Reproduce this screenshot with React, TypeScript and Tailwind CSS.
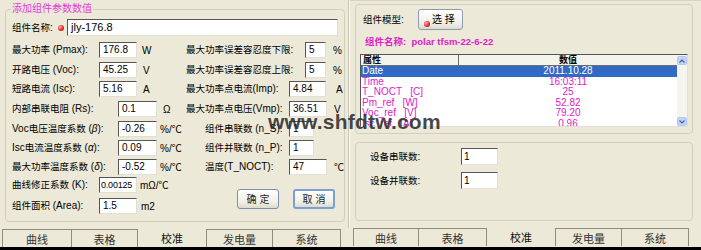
import React from "react";

const FONT = "font-['Liberation_Sans','Noto_Sans_CJK_SC',sans-serif]";

const CJK = /([\u3000-\u9fff\uff00-\uffef]+)/;

function M({ s }: { s: string }) {
  const parts = s.split(CJK);
  return (
    <>
      {parts.map((p, i) =>
        CJK.test(p) ? (
          <span key={i} className="text-[9.5px]">
            {p}
          </span>
        ) : (
          <React.Fragment key={i}>{p}</React.Fragment>
        )
      )}
    </>
  );
}

function Box({ cls, v, t }: { cls: string; v: string; t?: string }) {
  return (
    <div
      className={`h-[16px] shrink-0 bg-white border border-t-[#555] border-l-[#555] border-r-[#e2e0d6] border-b-[#e2e0d6] leading-[14px] text-black whitespace-nowrap overflow-hidden ${
        t ?? "text-[10px] pl-[3px]"
      } ${cls}`}
    >
      {v}
    </div>
  );
}

function Dot() {
  return (
    <span className="inline-block w-[6px] h-[6px] rounded-full bg-[radial-gradient(circle_at_35%_35%,#ffb0b0,#e02020_60%,#a00000)]" />
  );
}

function Tabs({ widths, first }: { widths: string[]; first: string }) {
  const names = ["曲线", "表格", "校准", "发电量", "系统"];
  return (
    <div className={`flex h-[18px] mt-[7px] ${first}`}>
      {names.map((n, i) => {
        const sel = i === 2;
        const cls =
          i === 0
            ? "border-l border-t border-r border-[#8c8c80]"
            : i === 1
            ? "border-t border-r border-[#8c8c80]"
            : i === 3
            ? "border-l border-t border-r border-[#8c8c80]"
            : i === 4
            ? "border-t border-r border-[#8c8c80]"
            : "";
        return (
          <div
            key={n}
            className={`${widths[i]} h-[18px] flex items-center justify-center text-[11px] ${sel ? "text-[#111]" : "text-[#333]"} ${cls}`}
          >
            <span className="mt-[3px]">{n}</span>
          </div>
        );
      })}
    </div>
  );
}

function Btn({ label, focus }: { label: string; focus?: boolean }) {
  return (
    <div
      className={`w-[42px] h-[20px] rounded-[3px] flex items-center justify-center text-[10px] text-[#222] bg-[linear-gradient(#ffffff,#f0efe6_70%,#dcdacb)] ${
        focus ? "border-2 border-[#7a9fd6]" : "border border-[#7f8fa8]"
      }`}
    >
      {label}
    </div>
  );
}

export default function App() {
  return (
    <div className={`w-[701px] h-[250px] bg-[#ece9d8] relative overflow-hidden ${FONT} text-[10px] text-black`}>
      <div className="flex h-[247px]">
        {/* Left panel */}
        <div className="w-[348px] flex flex-col">
          <div className="ml-[5px] mt-[9px] w-[340px] h-[213px] border border-[#d0d0bf] rounded-[4px] relative">
            <div className="absolute -top-[8px] left-[5px] px-[1px] bg-[#ece9d8] text-[10px] leading-[13px] text-[#e23cd8]">
              添加组件参数数值
            </div>
            <div className="pl-[6px] pt-[9px] flex flex-col">
              {/* name */}
              <div className="flex items-center h-[17px]">
                <span className="w-[46px]"><M s="组件名称:" /></span>
                <Dot />
                <div className="w-[3px]" />
                <div className="h-[17px] w-[271px] bg-white border border-t-[#555] border-l-[#555] border-r-[#e2e0d6] border-b-[#e2e0d6] pl-[3px] text-[11px] leading-[15px]">
                  jly-176.8
                </div>
              </div>
              {/* row 1 */}
              <div className="flex items-center h-[16px] mt-[6px]">
                <span className="w-[87px]"><M s="最大功率 (Pmax):" /></span>
                <Box cls="w-[38px]" v="176.8" />
                <span className="w-[49px] pl-[5px]">W</span>
                <span className="w-[119px]"><M s="最大功率误差容忍度下限:" /></span>
                <Box cls="w-[21px]" v="5" />
                <span className="ml-[7px]">%</span>
              </div>
              {/* row 2 */}
              <div className="flex items-center h-[16px] mt-[4px]">
                <span className="w-[87px]"><M s="开路电压 (Voc):" /></span>
                <Box cls="w-[38px]" v="45.25" />
                <span className="w-[49px] pl-[6px]">V</span>
                <span className="w-[119px]"><M s="最大功率误差容忍度上限:" /></span>
                <Box cls="w-[21px]" v="5" />
                <span className="ml-[7px]">%</span>
              </div>
              {/* row 3 */}
              <div className="flex items-center h-[16px] mt-[3px]">
                <span className="w-[87px]"><M s="短路电流 (Isc):" /></span>
                <Box cls="w-[38px]" v="5.16" />
                <span className="w-[49px] pl-[6px]">A</span>
                <span className="w-[103px]"><M s="最大功率点电流(Imp):" /></span>
                <Box cls="w-[37px]" v="4.84" />
                <span className="ml-[10px]">A</span>
              </div>
              {/* row 4 */}
              <div className="flex items-center h-[16px] mt-[4px]">
                <span className="w-[106px]"><M s="内部串联电阻 (Rs):" /></span>
                <Box cls="w-[39px]" v="0.1" />
                <span className="w-[29px] pl-[6px]">Ω</span>
                <span className="w-[103px]"><M s="最大功率点电压(Vmp):" /></span>
                <Box cls="w-[38px]" v="36.51" />
                <span className="ml-[7px]">V</span>
              </div>
              {/* row 5 */}
              <div className="flex items-center h-[16px] mt-[4px]">
                <span className="w-[106px]"><M s="Voc电压温度系数 (" /><i>β</i>):</span>
                <Box cls="w-[39px]" v="-0.26" />
                <span className="w-[29px] pl-[3px]">%/℃</span>
                <span className="w-[103px] pl-[19px]"><M s="组件串联数 (n_S):" /></span>
                <Box cls="w-[25px]" v="1" />
              </div>
              {/* row 6 */}
              <div className="flex items-center h-[16px] mt-[3px]">
                <span className="w-[106px]"><M s="Isc电流温度系数 (" /><i>α</i>):</span>
                <Box cls="w-[39px]" v="0.09" />
                <span className="w-[29px] pl-[3px]">%/℃</span>
                <span className="w-[103px] pl-[19px]"><M s="组件并联数 (n_P):" /></span>
                <Box cls="w-[25px]" v="1" />
              </div>
              {/* row 7 */}
              <div className="flex items-center h-[16px] mt-[3px]">
                <span className="w-[106px]"><M s="最大功率温度系数 (" /><i>δ</i>):</span>
                <Box cls="w-[39px]" v="-0.52" />
                <span className="w-[29px] pl-[3px]">%/℃</span>
                <span className="w-[103px] pl-[19px]"><M s="温度(T_NOCT):" /></span>
                <Box cls="w-[38px]" v="47" />
                <span className="ml-[7px]">℃</span>
              </div>
              {/* rows 8-9 + buttons */}
              <div className="flex mt-[2px]">
                <div className="flex flex-col w-[225px]">
                  <div className="flex items-center h-[16px]">
                    <span className="w-[87px]"><M s="曲线修正系数 (K):" /></span>
                    <Box cls="w-[38px]" t="text-[9px] pl-[1px] tracking-[-0.2px]" v="0.00125" />
                    <span className="pl-[3px]">mΩ/℃</span>
                  </div>
                  <div className="flex items-center h-[16px] mt-[5px]">
                    <span className="w-[87px]"><M s="组件面积 (Area):" /></span>
                    <Box cls="w-[38px]" v="1.5" />
                    <span className="pl-[4px]">m2</span>
                  </div>
                </div>
                <div className="flex mt-[12px] gap-[14px]">
                  <Btn label="确 定" />
                  <Btn label="取 消" focus />
                </div>
              </div>
            </div>
          </div>
          <Tabs first="ml-[2px]" widths={["w-[70px]", "w-[66px]", "w-[68px]", "w-[67px]", "w-[68px]"]} />
        </div>

        {/* separator */}
        <div className="w-[1px] h-[228px] bg-[#c8c5b4]" />
        <div className="w-[1px] h-[228px] bg-[#f8f7f0]" />

        {/* Right panel */}
        <div className="w-[351px] flex flex-col border-t border-[#d6d3c4]">
          <div className="ml-[5px] mt-[3px] w-[338px] h-[130px] border border-[#d0d0bf] rounded-[4px] flex flex-col">
            <div className="flex items-center pl-[7px] mt-[4px]">
              <span className="w-[55px]"><M s="组件模型:" /></span>
              <div className="w-[45px] h-[21px] rounded-[3px] border border-[#8d9bb0] bg-[linear-gradient(#ffffff,#f0efe6_70%,#dcdacb)] flex items-center pl-[5px] gap-[2px] text-[10px]">
                <span className="mt-[7px]"><Dot /></span>
                <span>选 择</span>
              </div>
            </div>
            <div className="pl-[9px] mt-[6px] h-[12px] leading-[12px] text-[9.5px] font-bold text-[#e020c8]">
              组件名称:&nbsp; polar tfsm-22-6-22
            </div>
            <div className="ml-[4px] mt-[6px] w-[328px] h-[73px] bg-white border border-t-[#555] border-l-[#555] border-r-[#e2e0d6] border-b-[#e2e0d6] flex overflow-hidden">
              <div className="w-[317px] flex flex-col">
                <div className="flex h-[11px] border-b border-[#6e6e6e] bg-[#f4f3ec] text-[9px] font-bold leading-[10px] shrink-0">
                  <div className="w-[98px] pl-[2px] border-r border-[#6e6e6e]">属性</div>
                  <div className="flex-1 text-center">数值</div>
                </div>
                {[
                  ["Date", "2011.10.28"],
                  ["Time", "16:03:11"],
                  ["T_NOCT   [C]", "25"],
                  ["Pm_ref   [W]", "52.82"],
                  ["Voc_ref   [V]", "79.20"],
                  ["Isc_ref   [A]", "0.96"],
                ].map(([a, b], i) => (
                  <div
                    key={a}
                    className={`flex h-[10.6px] shrink-0 text-[10px] leading-[10.6px] whitespace-pre ${
                      i === 0 ? "bg-[#316ac5] text-white" : "text-[#e020c8]"
                    }`}
                  >
                    <div className="w-[98px] pl-[1px]">{a}</div>
                    <div className="flex-1 text-center">{b}</div>
                  </div>
                ))}
              </div>
              <div className="w-[10px] flex flex-col bg-[#f5f4ef]">
                <div className="h-[9px] mt-[1px] rounded-[2px] bg-[#c3d3fd] border border-[#b4c8f6] flex items-center justify-center">
                  <svg width="6" height="4" viewBox="0 0 6 4"><path d="M0.5 3.5 L3 1 L5.5 3.5" stroke="#4d6185" strokeWidth="1.2" fill="none" /></svg>
                </div>
                <div className="flex-1" />
                <div className="h-[9px] rounded-[2px] bg-[#c3d3fd] border border-[#b4c8f6] flex items-center justify-center">
                  <svg width="6" height="4" viewBox="0 0 6 4"><path d="M0.5 0.5 L3 3 L5.5 0.5" stroke="#4d6185" strokeWidth="1.2" fill="none" /></svg>
                </div>
              </div>
            </div>
          </div>
          <div className="ml-[5px] mt-[8px] w-[338px] h-[79px] border border-[#d0d0bf] rounded-[4px] flex flex-col pl-[14px]">
            <div className="flex items-center mt-[5px]">
              <span className="w-[91px]"><M s="设备串联数:" /></span>
              <div className="h-[17px] w-[37px] bg-white border border-t-[#555] border-l-[#555] border-r-[#e2e0d6] border-b-[#e2e0d6] pl-[2px] text-[10px] leading-[15px]">1</div>
            </div>
            <div className="flex items-center mt-[7px]">
              <span className="w-[91px]"><M s="设备并联数:" /></span>
              <div className="h-[17px] w-[37px] bg-white border border-t-[#555] border-l-[#555] border-r-[#e2e0d6] border-b-[#e2e0d6] pl-[2px] text-[10px] leading-[15px]">1</div>
            </div>
          </div>
          <Tabs first="ml-[3px]" widths={["w-[66px]", "w-[68px]", "w-[68px]", "w-[67px]", "w-[67px]"]} />
        </div>
      </div>
      <div className="h-[3px] bg-black" />

      {/* watermark */}
      <div className="absolute left-[268px] top-[110px] text-[21px] font-bold font-['Liberation_Sans',sans-serif] text-[rgba(45,45,45,0.88)] leading-[24px] tracking-[0.2px]">
        www.shfdtw.com
      </div>
    </div>
  );
}
